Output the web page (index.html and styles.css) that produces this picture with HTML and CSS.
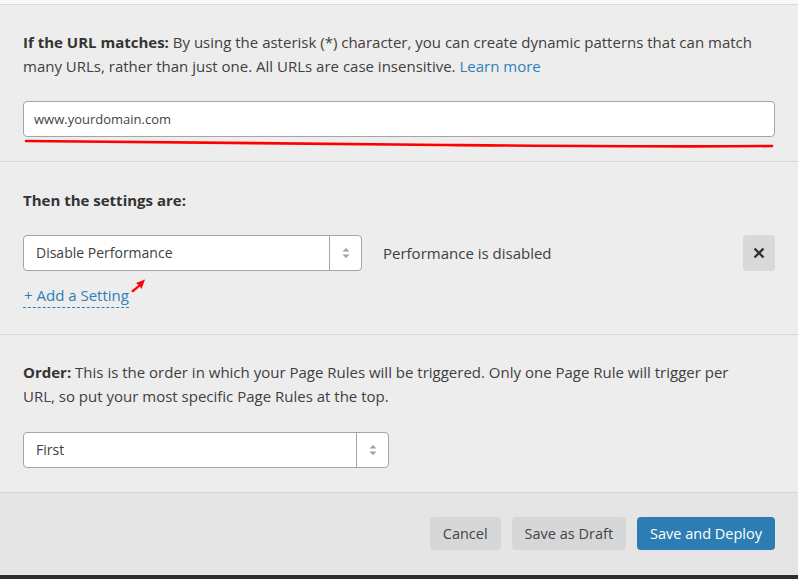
FILE: index.html
```html
<!DOCTYPE html>
<html>
<head>
    <title>Page Rule</title>
    <link rel="stylesheet" href="styles.css">
</head>
<body>
    <div class="modal">
        <div class="top-strip"></div>
        <section class="section">
            <p class="desc"><strong>If the URL matches:</strong> By using the asterisk (*) character, you can create dynamic patterns that can match many URLs, rather than just one. All URLs are case insensitive. <a href="#">Learn more</a></p>
            <div class="url-field">
                <div class="text-input">www.yourdomain.com</div>
                <!-- hand drawn red underline -->
                <svg class="scribble" viewBox="0 0 752 12" preserveAspectRatio="none">
                    <path d="M2 3 C 150 4, 300 6, 420 7 S 650 9, 748 8" fill="none" stroke="#f00" stroke-width="2.6" stroke-linecap="round"/>
                </svg>
            </div>
        </section>
        <section class="section section-settings">
            <h3 class="label">Then the settings are:</h3>
            <div class="setting-row">
                <div class="select select-setting">
                    <span class="select-text">Disable Performance</span>
                    <span class="spinner">
                        <svg width="8" height="12" viewBox="0 0 8 12"><path d="M4 1 L7.5 4.5 H0.5 Z M4 11 L7.5 7.5 H0.5 Z" fill="#a0a0a0"/></svg>
                    </span>
                </div>
                <span class="setting-value">Performance is disabled</span>
                <button class="remove" type="button">
                    <svg width="12" height="12" viewBox="0 0 12 12"><path d="M1.5 1.5 L10.5 10.5 M10.5 1.5 L1.5 10.5" stroke="#333" stroke-width="2.4"/></svg>
                </button>
            </div>
            <div class="add-wrap">
                <a class="add-setting" href="#">+ Add a Setting</a>
                <svg class="pointer" width="16" height="14" viewBox="0 0 16 14"><path d="M15 0.5 L6 4 L8.5 6 L1 12 L3 13.5 L10 7.5 L11.5 10 Z" fill="#f00"/></svg>
            </div>
        </section>
        <section class="section">
            <p class="desc"><strong>Order:</strong> This is the order in which your Page Rules will be triggered. Only one Page Rule will trigger per<br>URL, so put your most specific Page Rules at the top.</p>
            <div class="select select-order">
                <span class="select-text">First</span>
                <span class="spinner">
                    <svg width="8" height="12" viewBox="0 0 8 12"><path d="M4 1 L7.5 4.5 H0.5 Z M4 11 L7.5 7.5 H0.5 Z" fill="#a0a0a0"/></svg>
                </span>
            </div>
        </section>
        <footer class="footer">
            <button class="btn btn-grey" type="button">Cancel</button>
            <button class="btn btn-grey" type="button">Save as Draft</button>
            <button class="btn btn-blue" type="button">Save and Deploy</button>
        </footer>
        <div class="bottom-bar"></div>
    </div>
</body>
</html>
```

FILE: styles.css
```css
body {
    margin: 0;
    background-color: #ededed;
    font-family: "Open Sans", "Liberation Sans", sans-serif;
    color: #404040;
}
.modal {
    width: 798px;
    height: 579px;
    display: flex;
    flex-direction: column;
    overflow: hidden;
}
.top-strip {
    height: 4px;
    background-color: #f8f8f8;
    border-bottom: 1px solid #d9d9d9;
}
.section {
    background-color: #ededed;
    padding: 25px 23px 24px 23px;
    border-bottom: 1px solid #d6d6d6;
}
.section-settings {
    padding-bottom: 26px;
}
.desc {
    margin: 0;
    font-size: 15px;
    line-height: 24px;
}
.desc strong {
    color: #333;
}
.desc a {
    color: #2f7fb7;
    text-decoration: none;
}
.url-field {
    position: relative;
    margin-top: 23px;
}
.text-input {
    height: 34px;
    line-height: 34px;
    padding: 0 10px;
    background-color: #fff;
    border: 1px solid #a5a5a5;
    border-radius: 4px;
    font-size: 13px;
    color: #444;
}
.scribble {
    position: absolute;
    left: 1px;
    top: 37px;
    width: 752px;
    height: 12px;
}
.label {
    margin: 1px 0 0 0;
    font-size: 15px;
    line-height: 24px;
    font-weight: bold;
    color: #333;
}
.setting-row {
    display: flex;
    align-items: center;
    margin-top: 23px;
}
.select {
    display: flex;
    height: 34px;
    background-color: #fff;
    border: 1px solid #a5a5a5;
    border-radius: 4px;
    font-size: 14px;
}
.select-text {
    flex: 1;
    padding-left: 12px;
    line-height: 34px;
    color: #404040;
}
.spinner {
    width: 31px;
    border-left: 1px solid #a5a5a5;
    display: flex;
    align-items: center;
    justify-content: center;
}
.select-setting {
    width: 337px;
}
.select-order {
    width: 364px;
    margin-top: 24px;
}
.setting-value {
    flex: 1;
    margin-left: 21px;
    font-size: 15px;
}
.remove {
    width: 32px;
    height: 36px;
    border: none;
    border-radius: 4px;
    background-color: #d8d9da;
    display: flex;
    align-items: center;
    justify-content: center;
    padding: 0;
}
.add-wrap {
    position: relative;
    margin-top: 12px;
}
.add-setting {
    display: inline-block;
    font-size: 15px;
    line-height: 24px;
    color: #2f7fb7;
    text-decoration: none;
    border-bottom: 1px dashed #2f7fb7;
    padding-left: 1px;
}
.pointer {
    position: absolute;
    left: 107px;
    top: -4px;
}
.footer {
    flex: 1;
    background-color: #e5e5e5;
    display: flex;
    justify-content: flex-end;
    align-items: flex-start;
    gap: 11px;
    padding: 24px 23px 0 0;
}
.btn {
    height: 33px;
    border: none;
    border-radius: 4px;
    padding: 0 13px;
    font-family: "Open Sans", "Liberation Sans", sans-serif;
    font-size: 14.5px;
}
.btn-grey {
    background-color: #d6d7d8;
    color: #444;
}
.btn-blue {
    background-color: #2c7db3;
    color: #fff;
}
.bottom-bar {
    height: 4px;
    background-color: #2e2e2e;
}
```
